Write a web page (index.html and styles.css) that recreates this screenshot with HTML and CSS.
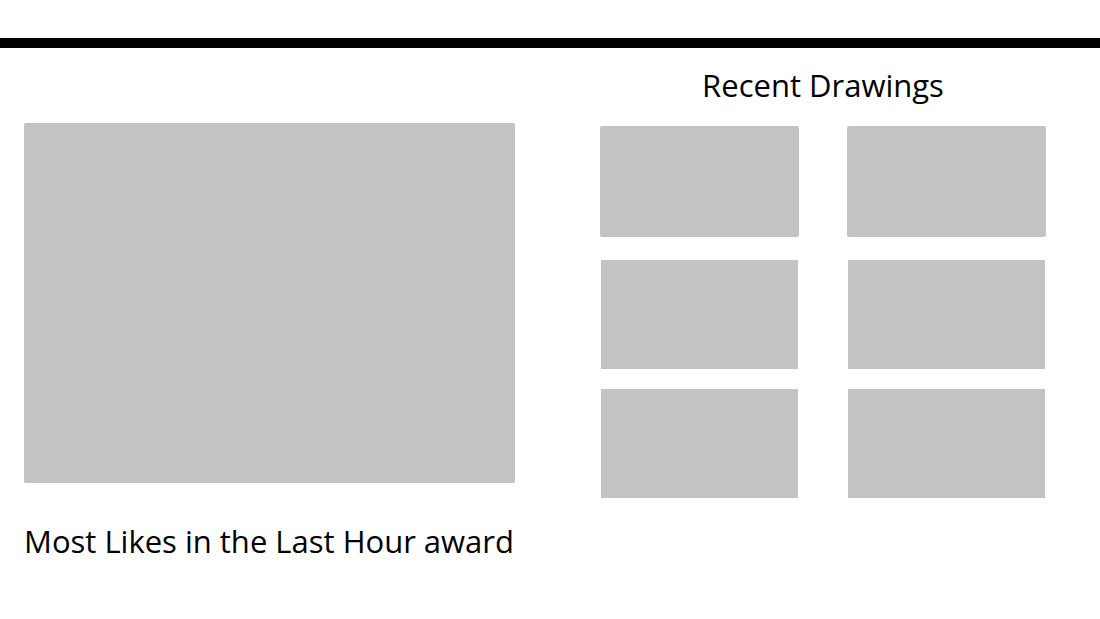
FILE: index.html
```html
<!DOCTYPE html>
<html lang="en">
<head>
<meta charset="utf-8">
<meta name="viewport" content="width=device-width, initial-scale=1">
<title>Drawings</title>
<link rel="stylesheet" href="styles.css">
</head>
<body>
<header class="topbar"></header>
<main class="layout">
  <section class="featured">
    <div class="featured-art"></div>
    <h1 class="heading featured-title">Most Likes in the Last Hour award</h1>
  </section>
  <section class="recent">
    <h2 class="heading recent-title">Recent Drawings</h2>
    <div class="grid">
      <div class="thumb thumb-large"></div>
      <div class="thumb thumb-large"></div>
      <div class="thumb"></div>
      <div class="thumb"></div>
      <div class="thumb"></div>
      <div class="thumb"></div>
    </div>
  </section>
</main>
</body>
</html>
```
FILE: styles.css
```css
* {
  box-sizing: border-box;
}

body {
  margin: 0;
  background: #fff;
  color: #000;
  font-family: "Segoe UI", "Open Sans", "Noto Sans", sans-serif;
}

.topbar {
  height: 48px;
  border-bottom: 10px solid #000;
}

.layout {
  display: grid;
  grid-template-columns: minmax(0, 491fr) minmax(0, 446fr);
  column-gap: 85px;
  padding: 0 54px 24px 24px;
}

.heading {
  margin: 0;
  font-size: 31px;
  font-weight: 400;
  line-height: 44px;
  white-space: nowrap;
}

.featured {
  padding-top: 75px;
}

.featured-art {
  aspect-ratio: 491 / 360;
  border-radius: 2px;
  background: #c3c3c3;
}

.featured-title {
  margin-top: 36px;
}

.recent {
  padding-top: 15px;
}

.recent-title {
  text-align: center;
}

.grid {
  display: grid;
  grid-template-columns: 1fr 1fr;
  gap: 20px 48px;
  margin-top: 19px;
}

.thumb {
  margin: 0 1px;
  aspect-ratio: 197 / 109;
  background: #c3c3c3;
}

.thumb-large {
  margin: 0 0 3px;
  aspect-ratio: 199 / 111;
  border-radius: 2px;
}
```
